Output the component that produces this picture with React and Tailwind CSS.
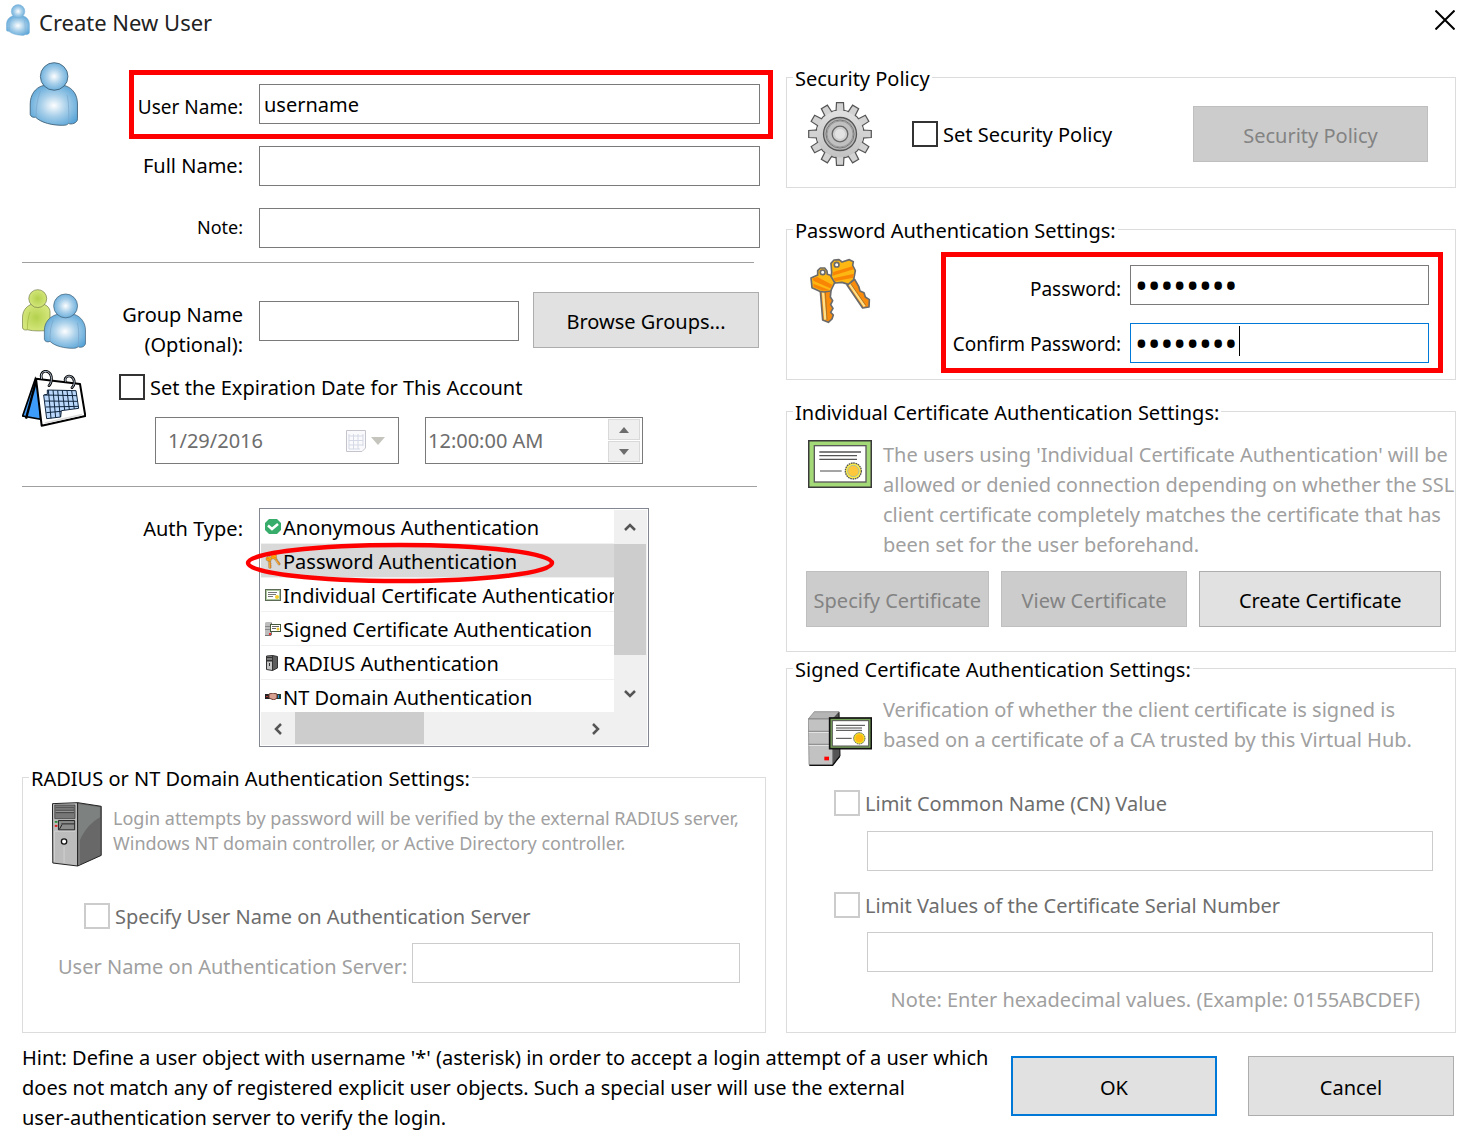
import { useState } from 'react';

// Icons
const UserIcon = ({ className, stroke = '#3b5a70' }) => (
  <svg className={className} viewBox="89 184 149 195" fill="none">
    <defs>
      <radialGradient id="user-body" cx="0.5" cy="0.5" r="0.6">
        <stop offset="0" stopColor="#fdfeff" />
        <stop offset="0.45" stopColor="#a9d0ea" />
        <stop offset="1" stopColor="#56a3d7" />
      </radialGradient>
    </defs>
    <path d="M130 256C106 262 91 285 91 312V344C93 351 100 354 107 352C125 370 160 377 190 377C200 377 205 375 208 371C215 376 236 370 235 357V312C235 285 222 264 197 256Z" fill="url(#user-body)" stroke={stroke} strokeWidth="2.5" />
    <path d="M122 272C113 295 108 325 109 352M203 284C209 305 209 345 208 371" stroke="#7aa3c8" strokeWidth="2" />
    <circle cx="164" cy="228" r="42" fill="url(#user-body)" stroke={stroke} strokeWidth="2.5" />
  </svg>
);

const GroupIcon = () => (
  <svg className="h-[60px] w-16 shrink-0" viewBox="66 56 192 181" fill="none">
    <defs>
      <radialGradient id="group-green">
        <stop offset="0" stopColor="#b4d14e" />
        <stop offset="1" stopColor="#d3e67a" />
      </radialGradient>
      <radialGradient id="group-blue" r="0.6">
        <stop offset="0" stopColor="#fdfeff" />
        <stop offset="0.45" stopColor="#a9d0ea" />
        <stop offset="1" stopColor="#56a3d7" />
      </radialGradient>
    </defs>
    <path d="M92 103C76 110 67 124 67 143V173C68 179 75 181 82 179C100 184 130 183 150 180V125C150 113 140 105 131 102Z" fill="url(#group-green)" stroke="#6c7640" strokeWidth="2" />
    <path d="M90 125C84 140 81 160 82 179" stroke="#9eb83e" strokeWidth="2" />
    <circle cx="113" cy="85" r="27" fill="url(#group-green)" stroke="#6c7640" strokeWidth="2" />
    <path d="M170 133C148 139 133 158 133 180V208C134 214 142 218 150 214C165 229 195 235 220 235C227 235 231 233 235 230C242 235 257 230 257 219V180C257 158 243 139 224 133Z" fill="url(#group-blue)" stroke="#3b5a70" strokeWidth="2" />
    <path d="M160 149C152 166 149 190 150 214M232 158C238 175 237 205 235 230" stroke="#7aa3c8" strokeWidth="2" />
    <circle cx="197" cy="107" r="36" fill="url(#group-blue)" stroke="#3b5a70" strokeWidth="2" />
  </svg>
);

const CalendarIcon = () => (
  <svg className="h-[57px] w-16 shrink-0" viewBox="66 300 192 171" fill="none">
    <path d="M106 326L68 438L122 448L116 350Z" fill="#3d9bfa" stroke="#000" strokeWidth="5" />
    <path d="M108 334L78 446" stroke="#000" strokeWidth="7" />
    <path d="M108 326L240 342L256 438L125 467Z" fill="#fff" stroke="#000" strokeWidth="6" strokeLinejoin="round" />
    <path d="M134 459L246 434" stroke="#ddd" strokeWidth="5" />
    <path d="M142 360L228 362L236 415L184 422L182 441L140 446L131 375L142 373Z" fill="#b9d7fb" stroke="#10263f" strokeWidth="3" />
    <path d="M133 375L231 377M135 393L233 394M137 411L235 409M139 428L183 424M145 360L153 445M159 360L167 443M173 361L181 441M187 361L194 420M201 362L208 419M215 362L223 417" stroke="#10263f" strokeWidth="3" />
    <path d="M125 326C119 309 132 301 143 305C158 311 157 338 147 347M196 334C192 321 205 315 214 320C226 328 225 345 216 353" stroke="#000" strokeWidth="8" strokeLinecap="round" />
    <path d="M125 326C119 309 132 301 143 305C158 311 157 338 147 347M196 334C192 321 205 315 214 320C226 328 225 345 216 353" stroke="#b8c7d8" strokeWidth="3" strokeLinecap="round" />
  </svg>
);

const teeth = [0, 30, 60, 90, 120, 150, 180, 210, 240, 270, 300, 330];

const GearIcon = () => (
  <svg className="size-16 shrink-0" viewBox="0 0 64 64">
    <defs>
      <linearGradient id="gear" x1="0" y1="0" x2="0" y2="1">
        <stop offset="0" stopColor="#e0e0e0" />
        <stop offset="1" stopColor="#c2c2c2" />
      </linearGradient>
    </defs>
    <circle cx="32" cy="32" r="24" fill="url(#gear)" stroke="#555" strokeWidth="1.2" />
    {teeth.map((angle) => (
      <path key={angle} d="M28 10L28.500 .7H35.500L36 10Z" fill="#d2d2d2" stroke="#555" strokeWidth="1.200" transform={`rotate(${angle} 32 32)`} />
    ))}
    <circle cx="32" cy="32" r="23.400" fill="url(#gear)" />
    <circle cx="32" cy="32" r="16.500" fill="#b4b4b4" stroke="#555" strokeWidth="1.300" />
    <circle cx="32" cy="32" r="14" fill="#b0b0b0" stroke="#777" />
    <circle cx="32" cy="32" r="13" fill="#c0c0c0" stroke="#999" />
    <circle cx="32" cy="32" r="7.800" fill="#d0d0d0" stroke="#666" strokeWidth="1.300" />
    <circle cx="32" cy="32" r="5" fill="#e2e2e2" />
  </svg>
);

const KeysIcon = ({ className }) => (
  <svg className={className} viewBox="87 591 186 198" strokeLinejoin="round">
    <path d="M201 672L248 741L267 738L268 716L256 708L252 695L240 690L236 676L224 655Z" fill="#f98c0c" stroke="#6b6b6b" strokeWidth="5" />
    <path d="M207 668L254 736" stroke="#ffe08a" strokeWidth="7" />
    <path d="M212 668L257 733" stroke="#8a6a30" strokeWidth="2" />
    <path d="M155 633L153 607L162 597L177 596L186 603L208 596L220 602L218 613L226 629L221 656L205 670L186 664L167 666L153 655Z" fill="#fdb713" stroke="#6b6b6b" strokeWidth="5" />
    <path d="M160 633L217 616L221 625L158 644ZM160 652L222 638L219 650L166 661Z" fill="#f98505" />
    <circle cx="170" cy="611" r="7" fill="#fff" stroke="#6b6b6b" strokeWidth="5" />
    <path d="M121 689L128 777L145 784L156 774L160 762L152 754L159 742L152 731L158 719L151 708L153 688Z" fill="#f98c0c" stroke="#6b6b6b" strokeWidth="5" />
    <path d="M129 692L136 776" stroke="#ffe08a" strokeWidth="7" />
    <path d="M136 692L141 777" stroke="#8a6a30" strokeWidth="2" />
    <path d="M93 651L113 642V629L121 621H134L141 630L142 640L151 643L164 665L152 690L132 693L119 691L96 680Z" fill="#fdb713" stroke="#6b6b6b" strokeWidth="5" />
    <path d="M97 653L112 648L158 672L151 682L101 660ZM100 668L150 688L128 689L101 678Z" fill="#f98505" />
    <circle cx="128" cy="634" r="7" fill="#fff" stroke="#6b6b6b" strokeWidth="5" />
  </svg>
);

const CertificateIcon = ({ className }) => (
  <svg className={className} viewBox="84 120 192 144" fill="none">
    <rect x="86" y="122" width="188" height="140" fill="#a3d977" stroke="#3a3a3a" strokeWidth="5" />
    <rect x="103" y="137" width="155" height="109" fill="#fff" stroke="#5a5a5a" strokeWidth="4" />
    <path d="M118 156H243M118 167H231M118 178H231" stroke="#555" strokeWidth="4" />
    <path d="M120 213H185" stroke="#777" strokeWidth="4" />
    <circle cx="220" cy="213" r="24" fill="#ffee45" stroke="#555" strokeWidth="4" strokeDasharray="5 2" />
    <circle cx="220" cy="213" r="17" fill="#ffc73b" stroke="#a8c0a0" strokeWidth="3" />
  </svg>
);

const SignedIcon = ({ className }) => (
  <svg className={className} viewBox="84 183 192 165" fill="none">
    <path d="M157 207L177 186L180 318L157 346Z" fill="#555" stroke="#111" strokeWidth="3" />
    <path d="M85 207L103 185H177L158 207Z" fill="#b5b5b5" stroke="#777" strokeWidth="2" />
    <path d="M85 207H158V344H87Z" fill="#c2c2c2" stroke="#777" strokeWidth="2" />
    <path d="M86 244H157M86 283H157" stroke="#555" strokeWidth="2" />
    <path d="M86 247H157M86 286H157" stroke="#fff" strokeWidth="2" />
    <path d="M88 346H158L179 319" stroke="#111" strokeWidth="4" />
    <rect x="133" y="320" width="14" height="11" fill="#f00" />
    <rect x="149" y="204" width="125" height="92" fill="#78a35b" stroke="#111" strokeWidth="5" />
    <rect x="157" y="212" width="109" height="76" fill="#fff" stroke="#555" strokeWidth="3" />
    <path d="M168 226H255M168 234H246M168 241H246M168 265H215" stroke="#444" strokeWidth="3" />
    <circle cx="238" cy="265" r="17" fill="#ece32c" stroke="#555" strokeWidth="3" strokeDasharray="4 2" />
    <circle cx="238" cy="265" r="12" fill="#ffb915" />
  </svg>
);

const ServerIcon = ({ className }) => (
  <svg className={className} viewBox="126 124 150 196" fill="none">
    <path d="M127 129L203 126V317L128 308Z" fill="#bcbcbc" stroke="#222" strokeWidth="3" />
    <path d="M203 126L274 137V285L203 317Z" fill="#686868" stroke="#222" strokeWidth="3" />
    <path d="M209 131L270 140V170C245 185 225 205 209 240Z" fill="#7d8280" />
    <path d="M207 129V314" stroke="#aaa" strokeWidth="2" />
    <path d="M134 133H195V174H134Z" fill="#777" stroke="#333" strokeWidth="2" />
    <path d="M137 142H192M137 148H192M137 156H192" stroke="#222" strokeWidth="2" />
    <path d="M137 145H191M137 153H191" stroke="#aaa" strokeWidth="2" />
    <path d="M145 180H194V208H145Z" fill="#8c8c8c" stroke="#222" strokeWidth="3" />
    <path d="M154 190H193M148 206L156 192" stroke="#222" strokeWidth="3" />
    <path d="M133 304V212H196M162 258V308" stroke="#dedede" strokeWidth="2" />
    <path d="M134 184H142" stroke="#1c8a28" strokeWidth="5" />
    <path d="M134 196H142" stroke="#d22" strokeWidth="6" />
    <circle cx="162" cy="243" r="8" fill="#fff" stroke="#111" strokeWidth="4" />
  </svg>
);

// 16px versions for the list
const CheckIcon = () => (
  <svg className="size-4" viewBox="0 0 16 16" fill="none">
    <path d="M4 0H12L16 4V11L12 15H4L0 11V4Z" fill="#38ad6b" />
    <path d="M3 6.500L7 10L13 5" stroke="#fff" strokeWidth="2.500" />
  </svg>
);

const SmallCertificateIcon = () => (
  <svg className="h-3 w-4" viewBox="0 0 16 12" fill="none">
    <rect x=".5" y=".5" width="15" height="11" fill="#a9c79a" stroke="#5b6b55" />
    <rect x="2" y="2" width="12" height="8" fill="#fff" />
    <path d="M3 3.500H12M3 5.500H11M3 7.500H8" stroke="#777" />
    <circle cx="12" cy="8" r="2" fill="#f2cb2e" />
  </svg>
);

const SmallSignedIcon = () => (
  <svg className="h-[14px] w-4" viewBox="0 0 16 14" fill="none">
    <path d="M0 1L1 0H7V13L6 14H0Z" fill="#bdbdbd" />
    <path d="M6.500 1V13M0 13.500H6" stroke="#777" />
    <path d="M0 4.500H6M0 7.500H6" stroke="#8a8a8a" />
    <path d="M4 11H6V13H4Z" fill="#e33" />
    <rect x="5.500" y="2.500" width="10" height="7" fill="#fff" stroke="#46583c" />
    <path d="M7 4.500H14M7 6.500H11" stroke="#666" />
    <circle cx="13" cy="7" r="1.500" fill="#e6c62c" />
  </svg>
);

const SmallServerIcon = () => (
  <svg className="ml-px h-4 w-3" viewBox="0 0 12 16" fill="none">
    <path d="M.5 1L6.500 .5V15.500L.5 14.500Z" fill="#c4c4c4" stroke="#333" />
    <path d="M6.500 .5L11.500 1.500V13L6.500 15.500Z" fill="#5c5c5c" stroke="#333" />
    <path d="M1 2.500H6M1 5.500H6" stroke="#333" strokeWidth="2" />
    <path d="M3 8H4V11H3Z" fill="#333" />
  </svg>
);

const HandshakeIcon = () => (
  <svg className="h-[7px] w-4" viewBox="0 0 16 7">
    <path d="M0 1H5V6H0Z" fill="#222" />
    <path d="M11 1H16V6H11Z" fill="#1d3c34" />
    <path d="M1 3H3V4H1Z" fill="#b33" />
    <path d="M13 2H14V5H13Z" fill="#2a8ad0" />
    <path d="M4 1L8 0L12 1V5L9 7L4 5Z" fill="#d8a090" stroke="#6b3b33" />
  </svg>
);

const Chevron = ({ points }) => (
  <svg className="size-3" viewBox="0 0 12 12" fill="none" stroke="#555" strokeWidth="2.500">
    <polyline points={points} />
  </svg>
);

const authTypes = [
  { name: 'Anonymous Authentication', icon: <CheckIcon /> },
  { name: 'Password Authentication', icon: <KeysIcon className="size-4" /> },
  { name: 'Individual Certificate Authentication', icon: <SmallCertificateIcon /> },
  { name: 'Signed Certificate Authentication', icon: <SmallSignedIcon /> },
  { name: 'RADIUS Authentication', icon: <SmallServerIcon /> },
  { name: 'NT Domain Authentication', icon: <HandshakeIcon /> },
];

const fieldClass = 'h-10 min-w-0 border bg-white px-1 outline-none';

function Button({ className = '', children, ...props }) {
  return (
    <button
      type="button"
      className={`h-14 border border-[#adadad] bg-[#e1e1e1] pt-[3px] whitespace-nowrap disabled:border-[#bfbfbf] disabled:bg-[#cccccc] disabled:text-[#838383] ${className}`}
      {...props}
    >
      {children}
    </button>
  );
}

function CheckBox({ label, disabled }) {
  return (
    <label className={`flex items-center gap-[5px] whitespace-nowrap ${disabled ? 'text-[#6d6d6d]' : ''}`}>
      <input
        type="checkbox"
        disabled={disabled}
        className="size-[26px] shrink-0 appearance-none border-2 border-[#333333] bg-white checked:bg-[#0078d7] disabled:border-[#cccccc]"
      />
      <span className="pt-[2px] leading-[28px]">{label}</span>
    </label>
  );
}

function Group({ title, className, children }) {
  return (
    <fieldset className={`min-w-0 border border-[#dcdcdc] ${className}`}>
      <legend className="ml-[6px] px-[2px] pt-1 leading-[26px] whitespace-nowrap">{title}</legend>
      {children}
    </fieldset>
  );
}

function AuthTypeList() {
  const [selected, setSelected] = useState('Password Authentication');

  return (
    <div className="relative w-[390px] border border-[#828790] p-px">
      <div className="flex h-[202px]">
        <ul role="listbox" aria-labelledby="auth-type" className="min-w-0 flex-1 overflow-hidden">
          {authTypes.map(({ name, icon }) => (
            <li
              key={name}
              role="option"
              aria-selected={name === selected}
              onClick={() => setSelected(name)}
              className={`flex h-[34px] items-center border-b border-[#f0f0f0] pl-1 whitespace-nowrap ${name === selected ? 'bg-[#d9d9d9]' : ''}`}
            >
              <span className="flex w-[18px] shrink-0 items-center">{icon}</span>
              <span className="pt-[3px]">{name}</span>
            </li>
          ))}
        </ul>
        <div className="flex w-8 flex-col bg-[#f0f0f0]">
          <button type="button" aria-label="Scroll up" className="flex h-[34px] items-center justify-center">
            <Chevron points="1,9 6,4 11,9" />
          </button>
          <div className="h-[111px] bg-[#cdcdcd]" />
          <button type="button" aria-label="Scroll down" className="mt-auto flex h-9 items-center justify-center">
            <Chevron points="1,3 6,8 11,3" />
          </button>
        </div>
        <div className="w-px bg-[#f0f0f0]" />
      </div>
      <div className="flex h-[33px] bg-[#f0f0f0]">
        <button type="button" aria-label="Scroll left" className="flex w-[34px] items-center justify-center">
          <Chevron points="9,1 4,6 9,11" />
        </button>
        <div className="h-8 w-[129px] bg-[#cdcdcd]" />
        <button type="button" aria-label="Scroll right" className="mr-[34px] ml-auto flex w-[34px] items-center justify-center">
          <Chevron points="3,1 8,6 3,11" />
        </button>
      </div>
      {/* Highlight around the selected type */}
      <svg className="pointer-events-none absolute top-[33px] -left-[15px] h-[42px] w-[310px]" viewBox="0 0 310 42" fill="none">
        <ellipse cx="155" cy="21" rx="152" ry="18" stroke="#ff0000" strokeWidth="4.500" />
      </svg>
    </div>
  );
}

export default function App() {
  const [userName, setUserName] = useState('username');
  const [password, setPassword] = useState('password');
  const [confirm, setConfirm] = useState('password');

  return (
    <div className="min-h-screen bg-white font-['Noto_Sans',sans-serif] text-[20px] leading-[30px] text-black">
      {/* Title bar */}
      <header className="flex h-[62px] items-start pt-1 pr-[22px] pl-[6px]">
        <UserIcon className="mr-[9px] h-8 w-6" stroke="#7fb2d6" />
        <h1 className="mt-[3px] text-[22px] text-[#222222]">Create New User</h1>
        <button type="button" aria-label="Close" className="mt-[5px] ml-auto p-px">
          <svg className="size-5" viewBox="0 0 20 20" stroke="#000" strokeWidth="2"><path d="M.5 .5L19.500 19.500M19.500 .5L.5 19.500" /></svg>
        </button>
      </header>

      <main className="grid grid-cols-[minmax(0,744fr)_minmax(0,670fr)] gap-5 px-[22px]">
        <div>
          {/* Names */}
          <section className="flex">
            <div className="w-[99px] shrink-0 pl-[7px]">
              <UserIcon className="h-16 w-[50px]" />
            </div>
            <div className="flex flex-1 flex-col gap-[22px] pt-[22px] pr-[6px]">
              <div className="relative flex gap-4">
                <label htmlFor="user-name" className="w-[122px] pt-2 text-right text-[19px] whitespace-nowrap">User Name:</label>
                <input id="user-name" value={userName} onChange={(e) => setUserName(e.target.value)} className={`${fieldClass} flex-1 border-[#7a7a7a]`} />
                <div className="pointer-events-none absolute -top-[14px] -right-[13px] -bottom-[15px] left-2 border-5 border-[#ff0000]" />
              </div>
              <div className="flex gap-4">
                <label htmlFor="full-name" className="w-[122px] pt-[5px] text-right">Full Name:</label>
                <input id="full-name" className={`${fieldClass} flex-1 border-[#7a7a7a]`} />
              </div>
              <div className="flex gap-4">
                <label htmlFor="note" className="w-[122px] pt-1 text-right text-[18px]">Note:</label>
                <input id="note" className={`${fieldClass} flex-1 border-[#7a7a7a]`} />
              </div>
            </div>
          </section>

          <hr className="mt-[14px] mr-3 border-[#a0a0a0]" />

          {/* Group */}
          <section className="mt-[26px] flex items-start">
            <GroupIcon />
            <label htmlFor="group-name" className="ml-[35px] w-[122px] pt-[11px] text-right">
              Group Name (Optional):
            </label>
            <input id="group-name" className={`${fieldClass} mt-3 ml-4 flex-1 border-[#7a7a7a]`} />
            <Button className="mt-[3px] mr-[7px] ml-[14px] w-[226px]">Browse Groups...</Button>
          </section>

          {/* Expiration */}
          <section className="mt-[10px] flex gap-[33px]">
            <CalendarIcon />
            <div className="pt-[2px]">
              <CheckBox label="Set the Expiration Date for This Account" />
              <div className="mt-[15px] ml-9 flex gap-[26px] text-[#6d6d6d]">
                <div className="flex h-[47px] w-[244px] items-center border border-[#7a7a7a] px-3">
                  <input aria-label="Expiration date" disabled defaultValue="1/29/2016" className="w-0 flex-1" />
                  <button type="button" disabled aria-label="Choose date" className="flex items-center gap-1">
                    <svg className="h-[22px] w-5" viewBox="0 0 20 22" fill="none" stroke="#c4c4cc">
                      <path d="M.5 .5H19.500V18L16 21.500H.5Z" fill="#fafafc" />
                      <path d="M3 6H17M3 10.500H17M3 15H17M3 19H14M3 4V19M7.500 4V19M12 4V19M17 4V16" stroke="#d5d9e6" />
                    </svg>
                    <svg className="h-2 w-4" viewBox="0 0 16 8"><path d="M1 0H15L8 8Z" fill="#c5c5bd" /></svg>
                  </button>
                </div>
                <div className="flex h-[47px] w-[218px] items-center border border-[#7a7a7a] pr-[2px] pl-[2px]">
                  <input aria-label="Expiration time" disabled defaultValue="12:00:00 AM" className="w-0 flex-1" />
                  <div className="flex flex-col gap-px">
                    <button type="button" disabled aria-label="Later" className="flex h-[21px] w-8 items-center justify-center border border-[#d9d9d9] bg-[#efefef]">
                      <svg className="h-[6px] w-[10px]" viewBox="0 0 10 6"><path d="M0 6L5 0L10 6Z" fill="#6d6d6d" /></svg>
                    </button>
                    <button type="button" disabled aria-label="Earlier" className="flex h-[21px] w-8 items-center justify-center border border-[#d9d9d9] bg-[#efefef]">
                      <svg className="h-[6px] w-[10px]" viewBox="0 0 10 6"><path d="M0 0L5 6L10 0Z" fill="#6d6d6d" /></svg>
                    </button>
                  </div>
                </div>
              </div>
            </div>
          </section>

          <hr className="mt-[22px] mr-[9px] border-[#a0a0a0]" />

          {/* Auth type */}
          <section className="mt-[21px] flex gap-4">
            <span id="auth-type" className="w-[221px] pt-[6px] text-right">Auth Type:</span>
            <AuthTypeList />
          </section>

          <Group title="RADIUS or NT Domain Authentication Settings:" className="mt-[15px] pr-[25px] pb-[49px]">
            <div className="flex gap-[11px] pt-[10px] pl-[29px]">
              <ServerIcon className="h-[65px] w-[50px] shrink-0" />
              <p className="pt-[4px] text-[18px] leading-[25px] whitespace-nowrap text-[#a0a0a0]">
                Login attempts by password will be verified by the external RADIUS server,<br />
                Windows NT domain controller, or Active Directory controller.
              </p>
            </div>
            <div className="mt-[34px] pl-[61px]">
              <CheckBox disabled label="Specify User Name on Authentication Server" />
            </div>
            <div className="mt-3 flex gap-[5px] pl-[35px]">
              <label htmlFor="server-user" className="pt-[9px] whitespace-nowrap text-[#a0a0a0]">User Name on Authentication Server:</label>
              <input id="server-user" disabled className={`${fieldClass} flex-1 border-[#cccccc]`} />
            </div>
          </Group>
        </div>

        <div>
          <Group title="Security Policy" className="pb-[21px]">
            <div className="flex items-center pt-[10px] pr-[27px] pl-[21px]">
              <GearIcon />
              <div className="ml-10"><CheckBox label="Set Security Policy" /></div>
              <Button disabled className="ml-auto w-[235px]">Security Policy</Button>
            </div>
          </Group>

          <Group title="Password Authentication Settings:" className="mt-[26px] pr-[26px] pb-4">
            <div className="flex justify-between pl-[22px]">
              <KeysIcon className="mt-[14px] h-[66px] w-[62px]" />
              <div className="relative mt-[21px] grid grid-cols-[171px_299px] gap-x-[9px] gap-y-[18px]">
                <label htmlFor="password" className="pt-[9px] text-right text-[19px]">Password:</label>
                <input id="password" type="password" value={password} onChange={(e) => setPassword(e.target.value)} className={`${fieldClass} border-[#7a7a7a] text-[34px]`} />
                <label htmlFor="confirm" className="pt-[6px] text-right text-[19px] whitespace-nowrap">Confirm Password:</label>
                <div className="relative flex">
                  <input id="confirm" type="password" value={confirm} onChange={(e) => setConfirm(e.target.value)} className={`${fieldClass} flex-1 border-[#0078d7] text-[34px]`} />
                  <div className="pointer-events-none absolute top-[3px] left-[109px] h-[30px] w-px bg-black" />
                </div>
                <div className="pointer-events-none absolute -top-[13px] -right-[14px] -bottom-[10px] -left-[9px] border-5 border-[#ff0000]" />
              </div>
            </div>
          </Group>

          <Group title="Individual Certificate Authentication Settings:" className="mt-4 pb-6">
            <div className="flex gap-[11px] pt-[14px] pl-[21px]">
              <CertificateIcon className="h-12 w-16 shrink-0" />
              <p className="whitespace-nowrap text-[#a0a0a0]">
                The users using 'Individual Certificate Authentication' will be<br />
                allowed or denied connection depending on whether the SSL<br />
                client certificate completely matches the certificate that has<br />
                been set for the user beforehand.
              </p>
            </div>
            <div className="mt-[11px] grid grid-cols-[183fr_187fr_242fr] gap-3 pr-[14px] pl-[19px]">
              <Button disabled>Specify Certificate</Button>
              <Button disabled>View Certificate</Button>
              <Button>Create Certificate</Button>
            </div>
          </Group>

          <Group title="Signed Certificate Authentication Settings:" className="mt-px pb-[17px]">
            <div className="flex gap-[11px] pt-3 pl-[21px]">
              <SignedIcon className="mt-4 h-[55px] w-16 shrink-0" />
              <p className="whitespace-nowrap text-[#a0a0a0]">
                Verification of whether the client certificate is signed is<br />
                based on a certificate of a CA trusted by this Virtual Hub.
              </p>
            </div>
            <div className="mt-[22px] flex flex-col pr-[22px] pl-[47px]">
              <CheckBox disabled label="Limit Common Name (CN) Value" />
              <input aria-label="Common Name" disabled className={`${fieldClass} mt-[13px] ml-[33px] border-[#cccccc]`} />
              <div className="mt-[19px]"><CheckBox disabled label="Limit Values of the Certificate Serial Number" /></div>
              <input aria-label="Serial Number" disabled className={`${fieldClass} mt-3 ml-[33px] border-[#cccccc]`} />
              <p className="mt-[13px] mr-[13px] text-right text-[#a0a0a0]">Note: Enter hexadecimal values. (Example: 0155ABCDEF)</p>
            </div>
          </Group>
        </div>
      </main>

      <footer className="mt-[10px] flex items-start justify-between pr-6 pl-[22px]">
        <p className="whitespace-nowrap">
          Hint: Define a user object with username '*' (asterisk) in order to accept a login attempt of a user which<br />
          does not match any of registered explicit user objects. Such a special user will use the external<br />
          user-authentication server to verify the login.
        </p>
        <div className="mt-[13px] flex gap-[31px]">
          <button type="button" className="h-[60px] w-[206px] border-2 border-[#0078d7] bg-[#e1e1e1] pt-[3px]">OK</button>
          <button type="button" className="h-[60px] w-[206px] border border-[#adadad] bg-[#e1e1e1] pt-[3px]">Cancel</button>
        </div>
      </footer>
    </div>
  );
}
